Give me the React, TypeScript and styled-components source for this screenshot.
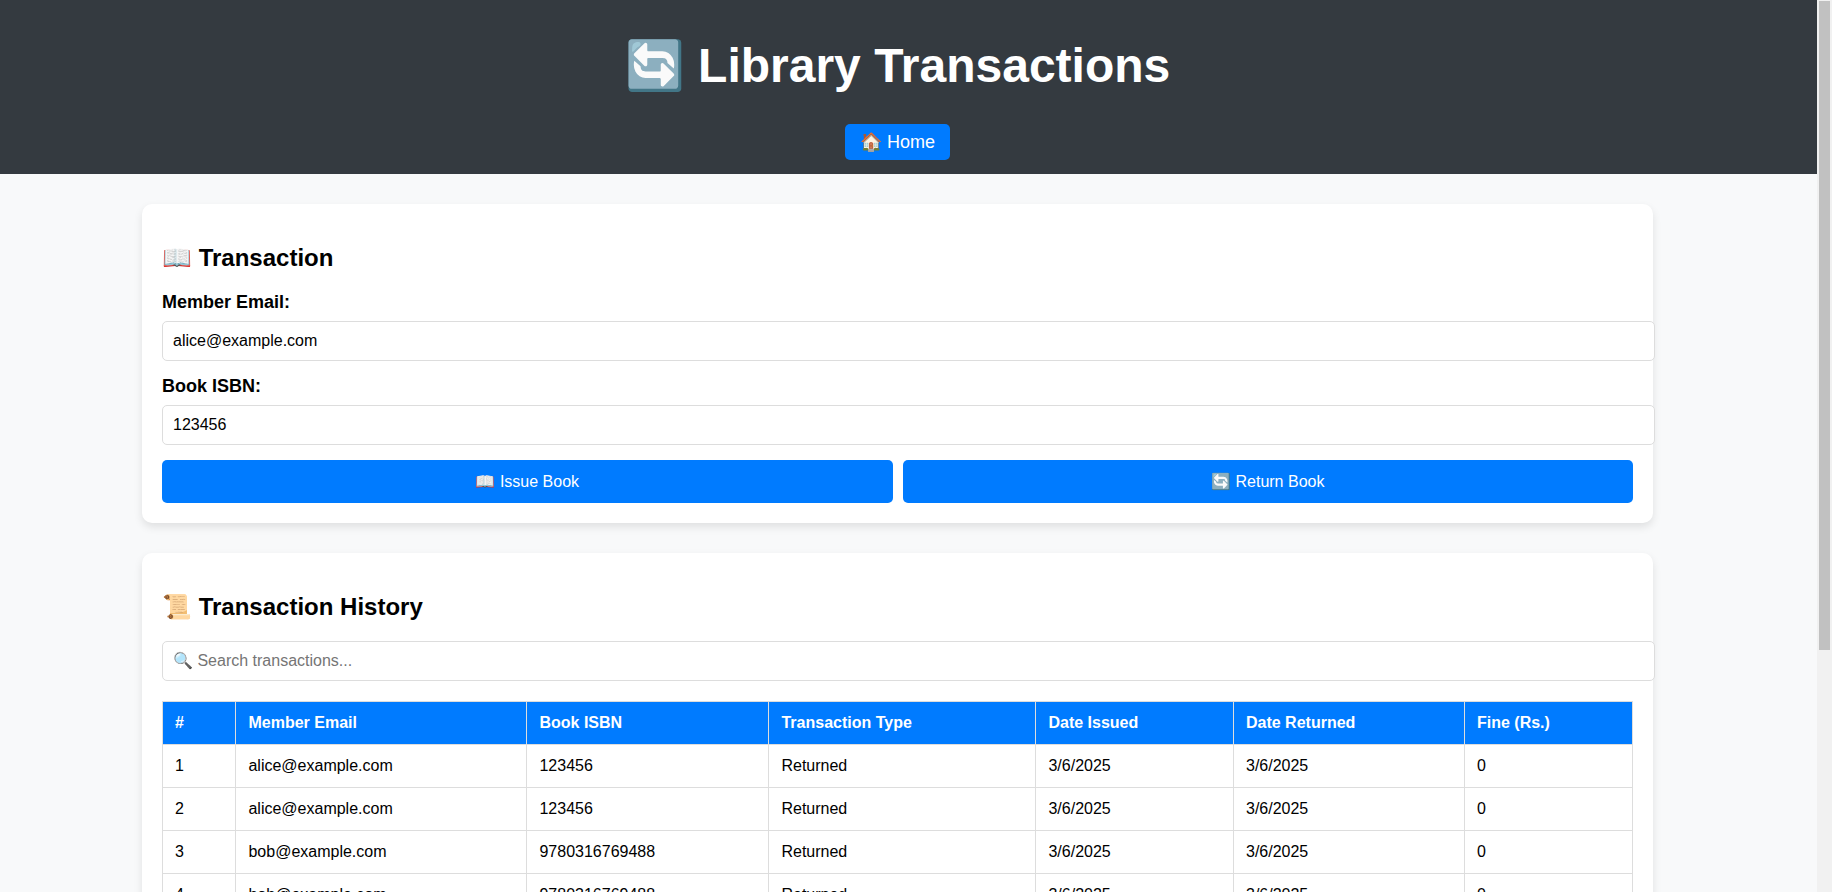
import React from "react";
import styled, { createGlobalStyle } from "styled-components";

const Global = createGlobalStyle`
  html { overflow-y: scroll; }
  body {
    margin: 0;
    background: #f8f9fa;
    color: #000;
    font-family: "Liberation Sans", Arial, sans-serif;
  }
`;

const ScrollTrack = styled.div`
  position: fixed;
  top: 0;
  right: 0;
  bottom: 0;
  width: 15px;
  background: #f1f1f1;
  z-index: 10;
`;

const ScrollThumb = styled.div`
  width: 11px;
  height: 649px;
  margin: 1px 2px 0;
  background: #c1c1c1;
`;

const Header = styled.header`
  background: #343a40;
  color: #fff;
  height: 174px;
  box-sizing: border-box;
  padding: 36px 37px 0 0;
  text-align: center;
`;

const Title = styled.h1`
  margin: 0 0 28px;
  font-size: 48px;
  line-height: 60px;
  font-weight: 700;
`;

const HomeLink = styled.a`
  display: inline-block;
  background: #007bff;
  color: #fff;
  font-size: 18px;
  line-height: 20px;
  padding: 8px 15px;
  border-radius: 5px;
  text-decoration: none;
`;

const Main = styled.main`
  padding: 30px 37px 30px 0;
`;

const Card = styled.section`
  width: 1511px;
  box-sizing: border-box;
  margin: 0 auto 30px;
  padding: 20px;
  background: #fff;
  border-radius: 10px;
  box-shadow: 0 4px 8px rgba(0, 0, 0, 0.1);
  &:last-child { margin-bottom: 0; }
`;

const CardTitle = styled.h2`
  font-size: 24px;
  font-weight: 700;
  margin: 20px 0;
`;

const Label = styled.label`
  display: block;
  font-size: 18px;
  font-weight: 700;
  margin-bottom: 8px;
`;

const Input = styled.input`
  display: block;
  width: 100%;
  padding: 10px;
  margin-bottom: 15px;
  border: 1px solid #ddd;
  border-radius: 5px;
  background: #fff;
  color: #000;
  font-family: inherit;
  font-size: 16px;
  line-height: 18px;
  outline: none;
`;

const Actions = styled.div`
  display: flex;
  gap: 10px;
`;

const Button = styled.button`
  flex: 1;
  height: 43px;
  border: 0;
  border-radius: 5px;
  background: #007bff;
  color: #fff;
  font-family: inherit;
  font-size: 16px;
`;

const Table = styled.table`
  width: 100%;
  table-layout: fixed;
  margin-top: 20px;
  border-collapse: collapse;
`;

const Column = styled.col<{ $w: number }>`
  width: ${(p) => p.$w}px;
`;

const Th = styled.th`
  background: #007bff;
  color: #fff;
  border: 1px solid #ddd;
  padding: 12px;
  font-size: 16px;
  line-height: 18px;
  font-weight: 700;
  text-align: left;
`;

const Td = styled.td`
  border: 1px solid #ddd;
  padding: 12px;
  font-size: 16px;
  line-height: 18px;
`;

const columns: [string, number][] = [
  ["#", 73.45],
  ["Member Email", 291],
  ["Book ISBN", 242],
  ["Transaction Type", 267],
  ["Date Issued", 197.55],
  ["Date Returned", 231],
  ["Fine (Rs.)", 168],
];

const rows = [
  ["alice@example.com", "123456"],
  ["alice@example.com", "123456"],
  ["bob@example.com", "9780316769488"],
  ["bob@example.com", "9780316769488"],
  ["bob@example.com", "9780316769488"],
  ["alice@example.com", "123456"],
  ["alice@example.com", "123456"],
  ["bob@example.com", "9780316769488"],
  ["alice@example.com", "123456"],
  ["bob@example.com", "9780316769488"],
];

export default function App() {
  return (
    <>
      <Global />
      <ScrollTrack>
        <ScrollThumb />
      </ScrollTrack>
      <Header>
        <Title>🔄 Library Transactions</Title>
        <HomeLink href="#">🏠 Home</HomeLink>
      </Header>
      <Main>
        <Card>
          <CardTitle>📖 Transaction</CardTitle>
          <Label>Member Email:</Label>
          <Input defaultValue="alice@example.com" />
          <Label>Book ISBN:</Label>
          <Input defaultValue="123456" />
          <Actions>
            <Button>📖 Issue Book</Button>
            <Button>🔄 Return Book</Button>
          </Actions>
        </Card>
        <Card>
          <CardTitle>📜 Transaction History</CardTitle>
          <Input placeholder="🔍 Search transactions..." />
          <Table>
            <colgroup>
              {columns.map(([name, w]) => (
                <Column key={name} $w={w} />
              ))}
            </colgroup>
            <thead>
              <tr>
                {columns.map(([name]) => (
                  <Th key={name}>{name}</Th>
                ))}
              </tr>
            </thead>
            <tbody>
              {rows.map(([email, isbn], i) => (
                <tr key={i}>
                  <Td>{i + 1}</Td>
                  <Td>{email}</Td>
                  <Td>{isbn}</Td>
                  <Td>Returned</Td>
                  <Td>3/6/2025</Td>
                  <Td>3/6/2025</Td>
                  <Td>0</Td>
                </tr>
              ))}
            </tbody>
          </Table>
        </Card>
      </Main>
    </>
  );
}
